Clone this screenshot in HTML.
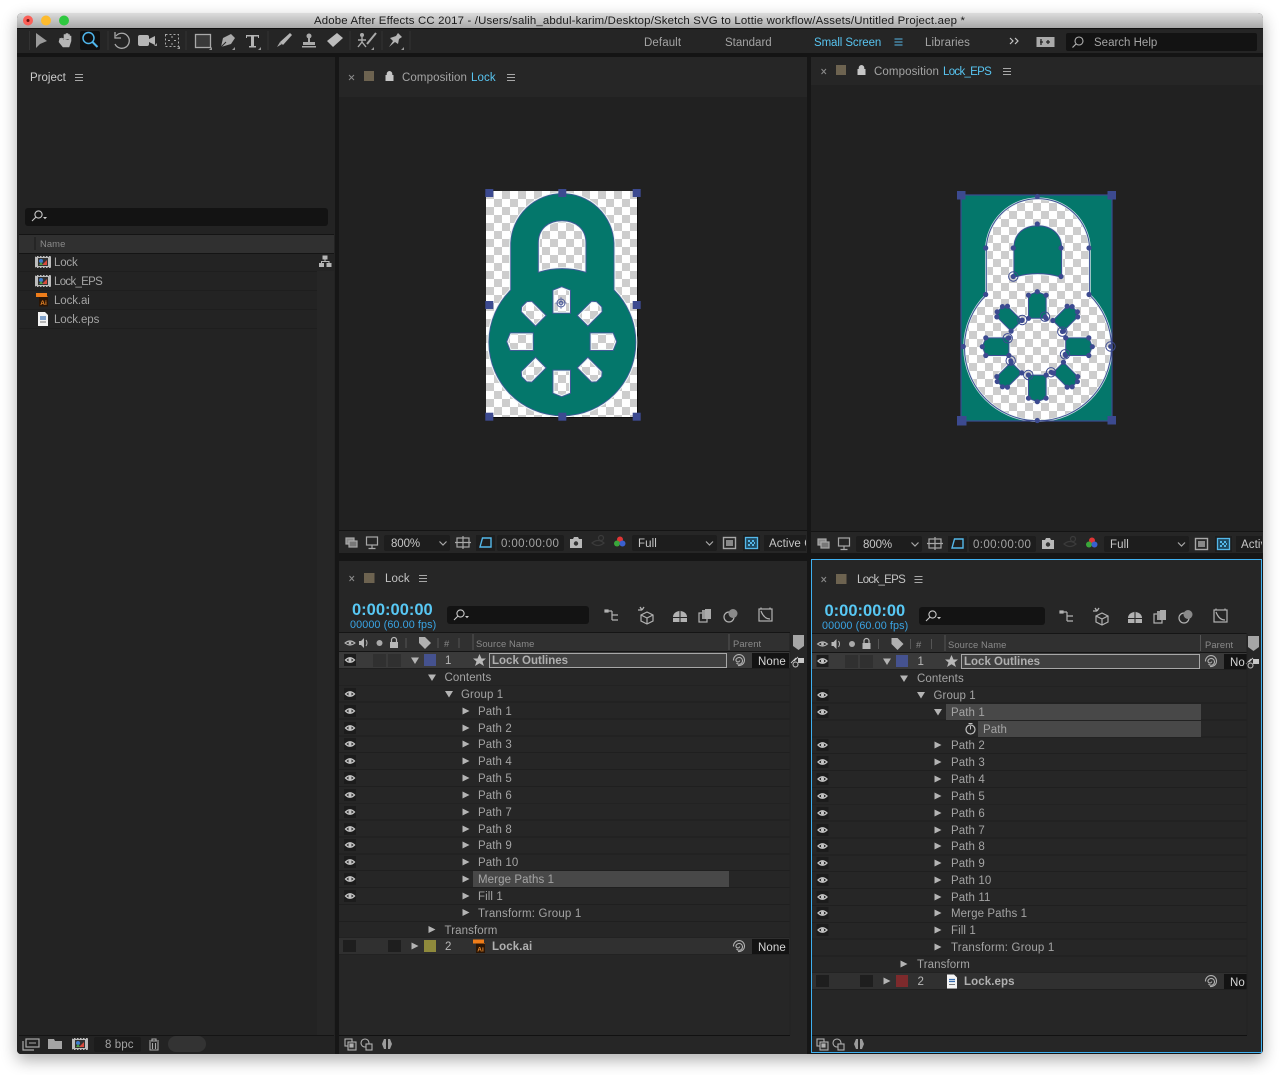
<!DOCTYPE html>
<html><head><meta charset="utf-8">
<style>
html,body{margin:0;padding:0;background:#fff;width:1280px;height:1075px;overflow:hidden}
#win{position:absolute;left:17px;top:13px;width:1246px;height:1041px;background:#161616;border-radius:5px 5px 4px 4px;box-shadow:0 6px 16px rgba(0,0,0,.32)}
.b{position:absolute}
.t{position:absolute;font:11.5px/16px "Liberation Sans",sans-serif;white-space:nowrap;color:#a4a4a4;font-style:normal;letter-spacing:.1px;margin-top:1px}
.h{font-size:9.4px;color:#8a8a8a}
.n{font-weight:bold;color:#b0b0b0}
.c{color:#58c4f0}
.e{letter-spacing:-.7px}
svg{position:absolute;left:0;top:0}
</style></head><body>
<div id="win"></div>
<!-- title -->
<div class="b" style="left:17px;top:13px;width:1246px;height:15px;background:linear-gradient(#dcdcdc,#a8a8a8);border-radius:5px 5px 0 0"></div>
<div class="b" style="left:17px;top:28px;width:1246px;height:25px;background:#252525;border-top:1px solid #111;box-sizing:border-box"></div>
<div class="b" style="left:17px;top:53px;width:1246px;height:4px;background:#141414"></div>
<!-- panels -->
<div class="b" style="left:17px;top:57px;width:318px;height:997px;background:#232323;border-radius:0 0 0 4px"></div>
<div class="b" style="left:317px;top:271px;width:17px;height:764px;background:#262626"></div>
<div class="b" style="left:339px;top:57px;width:468px;height:496px;background:#212121"></div>
<div class="b" style="left:339px;top:57px;width:468px;height:40px;background:#262626"></div>
<div class="b" style="left:811px;top:57px;width:452px;height:496px;background:#212121"></div>
<div class="b" style="left:811px;top:57px;width:452px;height:28px;background:#262626"></div>
<div class="b" style="left:339px;top:530px;width:468px;height:23px;background:#262626;border-top:1px solid #141414;box-sizing:border-box"></div>
<div class="b" style="left:811px;top:531px;width:452px;height:22px;background:#262626;border-top:1px solid #141414;box-sizing:border-box"></div>
<div class="b" style="left:339px;top:561px;width:468px;height:493px;background:#262626"></div>
<div class="b" style="left:811px;top:559px;width:451px;height:494px;background:#262626;border:1px solid #3fb0f0;box-sizing:border-box"></div>

<!-- project internals -->
<div class="b" style="left:25px;top:208px;width:303px;height:18px;background:#131313;border-radius:3px"></div>
<div class="b" style="left:19px;top:234px;width:315px;height:18px;background:#303030;border-top:1px solid #141414;border-bottom:1px solid #141414"></div>
<div class="b" style="left:19px;top:271px;width:298px;height:1px;background:#1e1e1e"></div>
<div class="b" style="left:19px;top:290px;width:298px;height:1px;background:#1e1e1e"></div>
<div class="b" style="left:19px;top:309px;width:298px;height:1px;background:#1e1e1e"></div>
<div class="b" style="left:19px;top:328px;width:298px;height:1px;background:#1e1e1e"></div>
<div class="b" style="left:19px;top:1035px;width:315px;height:1px;background:#141414"></div>
<div class="b" style="left:94px;top:1037px;width:47px;height:15px;background:#1c1c1c;border-radius:2px"></div>
<div class="b" style="left:168px;top:1036px;width:38px;height:16px;background:#333;border-radius:8px"></div>

<!-- comp footer boxes L -->
<div class="b" style="left:384px;top:535px;width:66px;height:16px;background:#1d1d1d;border-radius:2px"></div>
<div class="b" style="left:476px;top:535px;width:19px;height:16px;background:#1d1d1d"></div>
<div class="b" style="left:497px;top:535px;width:67px;height:16px;background:#1d1d1d;border-radius:2px"></div>
<div class="b" style="left:632px;top:535px;width:85px;height:16px;background:#1d1d1d;border-radius:2px"></div>
<div class="b" style="left:743px;top:535px;width:17px;height:16px;background:#1d1d1d"></div>
<div class="b" style="left:764px;top:535px;width:42px;height:16px;background:#1d1d1d"></div>
<!-- comp footer boxes R -->
<div class="b" style="left:856px;top:536px;width:66px;height:16px;background:#1d1d1d;border-radius:2px"></div>
<div class="b" style="left:948px;top:536px;width:19px;height:16px;background:#1d1d1d"></div>
<div class="b" style="left:969px;top:536px;width:67px;height:16px;background:#1d1d1d;border-radius:2px"></div>
<div class="b" style="left:1104px;top:536px;width:85px;height:16px;background:#1d1d1d;border-radius:2px"></div>
<div class="b" style="left:1215px;top:536px;width:17px;height:16px;background:#1d1d1d"></div>
<div class="b" style="left:1236px;top:536px;width:26px;height:16px;background:#1d1d1d"></div>

<!-- timeline L -->
<div class="b" style="left:447px;top:606px;width:142px;height:18px;background:#131313;border-radius:3px"></div>
<div class="b" style="left:339px;top:632px;width:451px;height:20px;background:#303030;border-top:1px solid #151515;border-bottom:1px solid #151515;box-sizing:border-box"></div>
<div class="b" style="left:339px;top:652px;width:451px;height:303px;background:repeating-linear-gradient(#262626 0,#262626 15.9px,#1f1f1f 15.9px,#1f1f1f 16.86px)"></div>
<div class="b" style="left:339px;top:652px;width:451px;height:16px;background:#3a3a3a"></div>
<div class="b" style="left:339px;top:938px;width:451px;height:16px;background:#303030"></div>
<div class="b" style="left:473px;top:871px;width:256px;height:16px;background:#484848"></div>
<div class="b" style="left:339px;top:1035px;width:451px;height:1px;background:#111"></div>
<div class="b" style="left:489px;top:653px;width:238px;height:15px;background:#404040;border:1.5px solid #a8a8a8;box-sizing:border-box"></div>
<div class="b" style="left:752px;top:653px;width:37px;height:15px;background:#131313"></div>
<div class="b" style="left:752px;top:939px;width:37px;height:15px;background:#131313"></div>
<div class="b" style="left:373px;top:654px;width:13px;height:13px;background:#303030"></div>
<div class="b" style="left:388px;top:654px;width:13px;height:13px;background:#303030"></div>
<div class="b" style="left:424px;top:654px;width:12px;height:12px;background:#45528f"></div>
<div class="b" style="left:424px;top:940px;width:12px;height:12px;background:#8f8a3c"></div>
<div class="b" style="left:343px;top:940px;width:13px;height:12px;background:#1e1e1e"></div>
<div class="b" style="left:388px;top:940px;width:13px;height:12px;background:#1e1e1e"></div>

<!-- timeline R -->
<div class="b" style="left:919px;top:607px;width:126px;height:18px;background:#131313;border-radius:3px"></div>
<div class="b" style="left:812px;top:633px;width:435px;height:20px;background:#303030;border-top:1px solid #151515;border-bottom:1px solid #151515;box-sizing:border-box"></div>
<div class="b" style="left:812px;top:653px;width:435px;height:337px;background:repeating-linear-gradient(#262626 0,#262626 15.9px,#1f1f1f 15.9px,#1f1f1f 16.86px)"></div>
<div class="b" style="left:812px;top:653px;width:435px;height:16px;background:#3a3a3a"></div>
<div class="b" style="left:812px;top:973px;width:435px;height:16px;background:#303030"></div>
<div class="b" style="left:946px;top:704px;width:255px;height:16px;background:#484848"></div>
<div class="b" style="left:978px;top:721px;width:223px;height:16px;background:#484848"></div>
<div class="b" style="left:812px;top:1035px;width:435px;height:1px;background:#111"></div>
<div class="b" style="left:961px;top:654px;width:239px;height:15px;background:#404040;border:1.5px solid #a8a8a8;box-sizing:border-box"></div>
<div class="b" style="left:1224px;top:654px;width:23px;height:15px;background:#131313"></div>
<div class="b" style="left:1224px;top:974px;width:23px;height:15px;background:#131313"></div>
<div class="b" style="left:845px;top:655px;width:13px;height:13px;background:#303030"></div>
<div class="b" style="left:860px;top:655px;width:13px;height:13px;background:#303030"></div>
<div class="b" style="left:896px;top:655px;width:12px;height:12px;background:#45528f"></div>
<div class="b" style="left:896px;top:975px;width:12px;height:12px;background:#7d2a2c"></div>
<div class="b" style="left:816px;top:975px;width:13px;height:12px;background:#1e1e1e"></div>
<div class="b" style="left:860px;top:975px;width:13px;height:12px;background:#1e1e1e"></div>

<!-- toolbar fields -->
<div class="b" style="left:1066px;top:33px;width:191px;height:18px;background:#131313;border-radius:2px"></div>
<div class="b" style="left:80px;top:31px;width:20px;height:19px;background:#101010;border-radius:2px"></div>

<svg width="1280" height="1075" viewBox="0 0 1280 1075">
<defs>
<pattern id="ck" width="16" height="16" patternUnits="userSpaceOnUse" x="486" y="191">
<rect width="16" height="16" fill="#fff"/><rect width="8" height="8" fill="#cdcdcd"/><rect x="8" y="8" width="8" height="8" fill="#cdcdcd"/></pattern>
<pattern id="ck2" width="16" height="16" patternUnits="userSpaceOnUse" x="961" y="195">
<rect width="16" height="16" fill="#fff"/><rect width="8" height="8" fill="#cdcdcd"/><rect x="8" y="8" width="8" height="8" fill="#cdcdcd"/></pattern>
<path id="outer" d="M510.7 290V243A51.7 51.7 0 0 1 614 243V290A73.5 73.5 0 1 1 510.7 290Z"/>
<path id="hole" d="M538.3 272.3V243C538.3 229 548 220.7 562 220.7C576 220.7 586 229 586 243V272.3Q562 265 538.3 272.3Z"/>
<path id="sp1" d="M552.9 313.3V290.2L561.7 286.7L570.5 290.2V313.3Z"/>
<path id="sp2" d="M554.2 312.2V292L558 288.7H565.4L569.2 292V312.2Z"/>
<g id="sps">
<use href="#sp1"/><use href="#sp2" transform="rotate(45 561.7 341.7)"/><use href="#sp1" transform="rotate(90 561.7 341.7)"/><use href="#sp2" transform="rotate(135 561.7 341.7)"/><use href="#sp1" transform="rotate(180 561.7 341.7)"/><use href="#sp2" transform="rotate(225 561.7 341.7)"/><use href="#sp1" transform="rotate(270 561.7 341.7)"/><use href="#sp2" transform="rotate(315 561.7 341.7)"/>
</g>
<mask id="m1" maskUnits="userSpaceOnUse" x="480" y="185" width="165" height="240"><rect x="480" y="185" width="165" height="240" fill="#fff"/><use href="#hole" fill="#000"/><use href="#sps" fill="#000"/></mask>
<mask id="m2" maskUnits="userSpaceOnUse" x="955" y="190" width="165" height="240"><rect x="955" y="190" width="165" height="240" fill="#fff"/><use href="#outer" fill="#000" transform="translate(475.6 5)"/></mask>
<g id="n1" fill="#3c4a90"><circle cx="552.9" cy="313.3" r="2.6"/><circle cx="552.9" cy="290.2" r="2.6"/><circle cx="561.7" cy="286.7" r="2.6"/><circle cx="570.5" cy="290.2" r="2.6"/><circle cx="570.5" cy="313.3" r="2.6"/></g>
<g id="n2" fill="#3c4a90"><circle cx="554.2" cy="312.2" r="2.6"/><circle cx="554.2" cy="292" r="2.6"/><circle cx="558" cy="288.7" r="2.6"/><circle cx="565.4" cy="288.7" r="2.6"/><circle cx="569.2" cy="292" r="2.6"/><circle cx="569.2" cy="312.2" r="2.6"/></g>
<g id="eye"><rect x="-6" y="-6" width="12" height="12" fill="#1c1c1c"/><path d="M-4.5 0Q0 -4.5 4.5 0Q0 4.5 -4.5 0Z" fill="none" stroke="#c4c4c4" stroke-width="1.3"/><circle r="1.6" fill="#c4c4c4"/></g>
<path id="td" d="M-4-3H4L0 3.5Z" fill="#b4b4b4"/>
<path id="tr" d="M-3.5-3.5L3.5 0L-3.5 3.5Z" fill="#b4b4b4"/>
<g id="swirl" fill="none" stroke="#b0b0b0" stroke-width="1.1"><path d="M-1 5.5A5.5 5.5 0 1 0 -5.5 0.5M-2.5 3A3.4 3.4 0 1 0 -3 -.5A1.7 1.7 0 1 0 .8 .5"/></g>
<g id="menu" stroke="#a8a8a8" stroke-width="1"><path d="M-4-3H4M-4 0H4M-4 3H4"/></g>
<g id="srch" fill="none" stroke="#c8c8c8" stroke-width="1.1"><circle cx="1.5" cy="-1.5" r="3.6"/><path d="M-1 1L-5 5"/><path d="M6 1H10L8 3.3Z" fill="#c8c8c8" stroke="none"/></g>
<path id="lk" d="M-3.5 -.5H3.5V4.5H-3.5ZM-2.3 -.5V-2.2A2.3 2.3 0 0 1 2.3 -2.2V-.5" fill="#c6c6c6" stroke="#c6c6c6" stroke-width="1"/>
<g id="comp"><rect x="-8" y="-6" width="16" height="12" fill="#bdbdbd" rx="1"/><path d="M-7.500-5.500H7.500M-7.500 5.500H7.500" stroke="#333" stroke-dasharray="1.500 1.500"/><rect x="-5" y="-4" width="10" height="8" fill="#333"/><circle cx="-2" cy="-1" r="2" fill="#3d7cd0"/><path d="M1 1L4 -2V3H-1Z" fill="#d84a3c"/><path d="M-4 3L-2 0L0 3Z" fill="#4da14a"/></g>
<g id="ai"><path d="M-4-7H5V-3.5H6V6.5H-3V-3H-6V-7Z" fill="#ef7d1a"/><rect x="-3" y="-3" width="9" height="9.5" fill="#2a1505"/><text x="1.5" y="5" font-family="Liberation Sans,sans-serif" font-size="6.5" font-weight="bold" text-anchor="middle" fill="#ef8a2a">Ai</text></g>
<g id="doc"><path d="M-5-7H2L5-4V7H-5Z" fill="#f4f4f4"/><path d="M-3-2H3M-3 0H3" stroke="#3a6fb0" stroke-width="1.2"/><path d="M-3 3H3" stroke="#777" stroke-width="1"/></g>
<g id="cfoot" fill="none" stroke="#a8a8a8" stroke-width="1.2">
<rect x="346" y="538" width="8" height="6" fill="#8a8a8a"/><rect x="349" y="541" width="8" height="6" fill="#777"/>
<rect x="366.500" y="537" width="11" height="8"/><path d="M372 545V548M368.500 548.500H375.500"/>
<rect x="457" y="538" width="12" height="9"/><path d="M463 536V549M455 542.500H471"/>
<path d="M480 547L482.500 538H491V547Z" stroke="#55b8ea" stroke-width="1.4"/>
<path d="M570 539H573L574 537H578L579 539H582V548H570Z" fill="#b8b8b8" stroke="none"/><circle cx="576" cy="543.500" r="2.200" fill="#333" stroke="none"/>
<path d="M592 543Q598 538 604 543Q598 548 592 543Z" stroke="#3b3b3b"/><circle cx="601" cy="538" r="2.500" stroke="#3b3b3b"/>
<rect x="723.500" y="537.500" width="12" height="11" stroke-width="1.4"/><rect x="726" y="540" width="7" height="6" fill="#888" stroke="none"/>
<rect x="745.500" y="537.500" width="12" height="11" stroke="#55b8ea" stroke-width="1.3" fill="#1f4a62"/><path d="M748 540h2v2h-2zM752 540h2v2h-2zM750 542h2v2h-2zM754 542h1v2h-1zM748 544h2v2h-2zM752 544h2v2h-2z" fill="#55b8ea" stroke="none"/>
<path d="M439.500 541.500L443 545L446.500 541.500M706 541.500L709.500 545L713 541.500"/>
</g>
<g id="cols" fill="none" stroke="#b2b2b2" stroke-width="1.2">
<path d="M606 611H612M612 611V620M612 615H618M612 620H618"/><rect x="605" y="610" width="3" height="2" fill="#b2b2b2"/>
<path d="M647 612L653 615V621L647 624L641 621V615Z"/><path d="M641 615L647 618L653 615M647 618V624"/><path d="M640 607L642 610M638 610H642M644 607L642 610" stroke-width="1.3"/>
<path d="M673 617A7 6 0 0 1 687 617Z" fill="#b2b2b2" stroke="none"/><rect x="673" y="618" width="14" height="4" fill="#b2b2b2" stroke="none"/><path d="M680 610V622" stroke="#333"/>
<rect x="699" y="613" width="8" height="9" fill="#262626"/><rect x="702" y="610" width="9" height="9" fill="#9a9a9a" stroke="none"/><rect x="705" y="609" width="6" height="10" fill="#aaa" stroke="none"/>
<circle cx="729" cy="617" r="5"/><circle cx="733" cy="613.500" r="4.500" fill="#8a8a8a" stroke="none"/>
<rect x="759" y="609" width="13" height="12"/><path d="M761 611Q764 619 770 619"/><path d="M761 607.500V609M770 607.500V609"/>
</g>
<g id="pick" fill="none" stroke="#c8c8c8" stroke-width="1"><circle cx="-1.500" cy="3.500" r="2.500"/><path d="M-3 0L1-4"/><rect x="1" y="-3" width="6" height="5" fill="#c8c8c8" stroke="none"/><path d="M-6 2L-1-3"/></g>
<g id="bot" fill="none" stroke="#b0b0b0" stroke-width="1.1">
<rect x="-6" y="-5" width="7" height="7"/><rect x="-3" y="-2" width="8" height="8" fill="#333"/><rect x="-1" y="0" width="3" height="3" fill="#b0b0b0"/>
<circle cx="14" cy="-1" r="4"/><rect x="15" y="0" width="6" height="6" fill="#2a2a2a"/>
<path d="M33-5H35V5H33L31 0ZM37-5H39L41 0L39 5H37Z" fill="#9c9c9c" stroke="none"/>
</g>
<g id="hdr">
<path d="M-5 0Q0-4 5 0Q0 4-5 0Z" fill="none" stroke="#b8b8b8" stroke-width="1.1"/><circle r="1.400" fill="#b8b8b8"/>
<path d="M9-2H11L14-5V5L11 2H9Z" fill="#b8b8b8"/><path d="M16-3Q18 0 16 3" fill="none" stroke="#b8b8b8"/>
<circle cx="29.500" r="3" fill="#aaa"/>
<rect x="40" y="-1" width="8" height="6" fill="#b8b8b8"/><path d="M41.500-1V-3A2.500 2.500 0 0 1 46.500-3V-1" fill="none" stroke="#b8b8b8" stroke-width="1.200"/>
<path d="M56-5V5" stroke="#555"/>
<path d="M69-6H75L81 0L75 6L69 0Z" fill="#b0b0b0"/>
<path d="M88-5V5" stroke="#555"/><path d="M109-5V5" stroke="#555"/>
</g>
</defs>

<!-- traffic lights -->
<circle cx="28" cy="20.500" r="5" fill="#fb5f57"/><circle cx="28" cy="20.500" r="1.500" fill="#6b0f0c"/>
<circle cx="46" cy="20.500" r="5" fill="#fdbb2e"/><circle cx="64" cy="20.500" r="5" fill="#2fc840"/>

<!-- toolbar icons -->
<path d="M36 33V48L40 44L47 41Z" fill="#9a9a9a"/>
<path d="M60 38L59 42L63 47H69L71 41V36H69.500V40M69.500 40V34.500H68V39M68 39V33.500H66V39M66 39V34.500H64V40.500L61.500 38Z" fill="#b6b6b6" stroke="#b6b6b6" stroke-width=".6" stroke-linejoin="round"/>
<circle cx="88.500" cy="38" r="5.500" fill="none" stroke="#4fb6ec" stroke-width="1.500"/><path d="M92.500 42L97.500 47" stroke="#4fb6ec" stroke-width="2"/>
<path d="M116 36A7.500 7.500 0 1 1 115 44" fill="none" stroke="#aaa" stroke-width="1.300"/><path d="M115 32V38H121" fill="none" stroke="#aaa" stroke-width="1.300"/>
<rect x="138" y="35" width="11" height="11" rx="2" fill="#b6b6b6"/><path d="M149 39L155 36V45L149 42Z" fill="#b6b6b6"/>
<rect x="165.500" y="34.500" width="13" height="12" fill="none" stroke="#aaa" stroke-dasharray="2 2"/><path d="M172 36V38M172 43V45M168 40.500H170M174 40.500H176" stroke="#aaa"/>
<rect x="195.500" y="34.500" width="15" height="13" fill="#3a3a3a" stroke="#a9a9a9" stroke-width="1.300"/>
<path d="M221 47L223 38L231 34L235 38L231 44Z" fill="#aaa"/><path d="M221 47L226 42" stroke="#252525"/>
<path d="M246 35H259V38H258V36.500H254V46H256V47.500H249V46H251V36.500H247V38H246Z" fill="#b4b4b4"/>
<path d="M277 47L280 42L282 44Z" fill="#aaa"/><path d="M280 42L290 33L292 35L283 45Z" fill="#b5b5b5"/>
<circle cx="309" cy="36" r="2.500" fill="#aaa"/><path d="M308 38H310V42H315V45H303V42H308Z" fill="#aaa"/><rect x="302" y="46" width="14" height="1.500" fill="#aaa"/>
<path d="M327 41L337 33L343 38L333 47Z" fill="#bcbcbc"/>
<circle cx="362" cy="35" r="2" fill="#aaa"/><path d="M362 37V42L358 47M362 42L366 47M358 40H366" fill="none" stroke="#aaa" stroke-width="1.400"/><path d="M367 44L376 33" stroke="#aaa" stroke-width="2"/>
<path d="M389 47L393 41L390 38L396 36L398 33L402 37L399 39L398 44L395 42Z" fill="#b4b4b4"/>
<g stroke="#333"><path d="M29.500 31V50M108 31V50M186 31V50M268 31V50M350 31V50M382 31V50M410 31V50" /></g>
<g fill="#999"><path d="M157 46H154L157 43ZM212 50H209L212 47ZM235 50H232L235 47ZM261 50H258L261 47ZM374 50H371L374 47ZM404 50H401L404 47ZM180 49H177L180 46Z"/></g>

<path d="M894.500 39H902.500M894.500 42H902.500M894.500 45H902.500" stroke="#56b8e8"/>
<path d="M1010 38L1013 41L1010 44M1015 38L1018 41L1015 44" fill="none" stroke="#c4c4c4" stroke-width="1.200"/>
<rect x="1036.500" y="37" width="18" height="10" fill="#aaa"/><path d="M1040 42h3M1048 40v4M1046 42h4M1041 39v6" stroke="#252525" stroke-width="1.300"/>
<circle cx="1079" cy="41" r="4" fill="none" stroke="#b0b0b0" stroke-width="1.100"/><path d="M1076 44L1072.500 47.500" stroke="#b0b0b0" stroke-width="1.200"/>

<!-- panel tabs -->
<use href="#menu" x="79" y="77.500"/>
<use href="#srch" x="37" y="216"/>
<path d="M349 75L354 80M354 75L349 80M821.500 69L826 74M826 69L821.500 74M349.500 576L354 581M354 576L349.500 581M821.500 577L826 582M826 577L821.500 582" stroke="#8a8a8a"/>
<rect x="364" y="71" width="10" height="10" fill="#6d6350"/><rect x="836" y="65" width="10" height="10" fill="#6d6350"/>
<rect x="364" y="573" width="10.500" height="10" fill="#6d6350"/><rect x="836" y="574" width="10.500" height="10" fill="#6d6350"/>
<use href="#lk" x="389.500" y="76"/><use href="#lk" x="861.500" y="70"/>
<use href="#menu" x="511" y="77.500"/><use href="#menu" x="1007" y="71.500"/>
<use href="#menu" x="423" y="578.500"/><use href="#menu" x="918.500" y="579.500"/>

<!-- project icons -->
<use href="#comp" x="43" y="262"/><use href="#comp" x="43" y="281"/><use href="#ai" x="42" y="300"/><use href="#doc" x="43" y="319"/>
<g fill="#b5b5b5"><rect x="322.500" y="255.500" width="5" height="4"/><rect x="319" y="263" width="5" height="4"/><rect x="326.500" y="263" width="5" height="4"/></g>
<path d="M325 259.500V261.500M321.500 263V261.500H329V263" stroke="#b5b5b5" fill="none"/>
<path d="M35 237V250" stroke="#1a1a1a"/>
<!-- project bottom -->
<rect x="26" y="1039" width="13" height="8" fill="none" stroke="#aaa" stroke-width="1.200"/><path d="M23 1041V1050H34" fill="none" stroke="#aaa" stroke-width="1.200"/><path d="M29 1043H36" stroke="#aaa"/>
<path d="M48 1039H54L55 1041H62V1049H48Z" fill="#a5a5a5"/>
<use href="#comp" x="80" y="1044"/>
<path d="M149 1041H159M150 1042V1050H158V1042M152 1041V1039H156V1041M152.500 1043V1049M155.500 1043V1049" fill="none" stroke="#aaa" stroke-width="1.100"/>
<use href="#bot" x="351" y="1044"/><use href="#bot" x="823" y="1044"/>

<!-- comp footers -->
<use href="#cfoot"/><use href="#cfoot" x="472" y="1"/>
<circle cx="620" cy="539.500" r="3" fill="#e03535"/><circle cx="617" cy="543.500" r="3" fill="#3aa63a"/><circle cx="622.500" cy="543.500" r="3" fill="#3a60d0"/>
<circle cx="1092" cy="540.500" r="3" fill="#e03535"/><circle cx="1089" cy="544.500" r="3" fill="#3aa63a"/><circle cx="1094.500" cy="544.500" r="3" fill="#3a60d0"/>

<!-- LEFT comp -->
<rect x="487" y="192" width="151" height="226" fill="#0c0c0c"/>
<rect x="486" y="191" width="151" height="226" fill="url(#ck)"/>
<use href="#outer" fill="none" stroke="#eef8f6" stroke-width="3"/>
<use href="#hole" fill="none" stroke="#eef8f6" stroke-width="3"/>
<use href="#sps" fill="none" stroke="#eef8f6" stroke-width="3"/>
<use href="#outer" fill="#04776b" mask="url(#m1)"/>
<use href="#outer" fill="none" stroke="#3f5a96" stroke-width=".9"/>
<use href="#hole" fill="none" stroke="#3f5a96"/>
<use href="#sps" fill="none" stroke="#3f5a96"/>
<g fill="#3c4a90"><rect x="485.300" y="189" width="8" height="8"/><rect x="558.300" y="189" width="8" height="8"/><rect x="632.700" y="189" width="8" height="8"/><rect x="485.300" y="301" width="8" height="8"/><rect x="632.700" y="301" width="8" height="8"/><rect x="485.300" y="412.700" width="8" height="8"/><rect x="558.300" y="412.700" width="8" height="8"/><rect x="632.700" y="412.700" width="8" height="8"/></g>
<circle cx="561" cy="303" r="4" fill="none" stroke="#4a5a98"/><circle cx="561" cy="303" r="1.800" fill="none" stroke="#4a5a98"/><path d="M561 297V309M555 303H567" stroke="#4a5a98" stroke-width=".6"/>

<!-- RIGHT comp -->
<rect x="961" y="195" width="151" height="226" fill="url(#ck2)"/>
<rect x="961" y="195" width="151" height="226" fill="#04776b" mask="url(#m2)"/>
<g transform="translate(475.600 5)">
<use href="#hole" fill="none" stroke="#eef8f6" stroke-width="3"/>
<use href="#sps" fill="none" stroke="#eef8f6" stroke-width="3"/>
<use href="#hole" fill="#04776b" stroke="#3f4f96"/>
<use href="#sps" fill="#04776b" stroke="#3f4f96"/>
<use href="#outer" fill="none" stroke="#e8f4f2" stroke-width="2.500" opacity=".85"/>
<use href="#outer" fill="none" stroke="#3f4f96" stroke-width="1"/>
<use href="#n1"/><use href="#n2" transform="rotate(45 561.700 341.700)"/><use href="#n1" transform="rotate(90 561.700 341.700)"/><use href="#n2" transform="rotate(135 561.700 341.700)"/><use href="#n1" transform="rotate(180 561.700 341.700)"/><use href="#n2" transform="rotate(225 561.700 341.700)"/><use href="#n1" transform="rotate(270 561.700 341.700)"/><use href="#n2" transform="rotate(315 561.700 341.700)"/>
</g>
<rect x="961" y="195" width="151" height="226" fill="none" stroke="#3c4a90" stroke-width="1.200"/>
<g fill="#3c4a90">
<rect x="957" y="191" width="8.500" height="8.500"/><rect x="1107.500" y="191" width="8.500" height="8.500"/><rect x="957" y="416" width="9.500" height="9.500"/><rect x="1107.500" y="416" width="8.500" height="8.500"/>
<circle cx="1037.300" cy="196.500" r="2.600"/><circle cx="1037.300" cy="420.500" r="2.600"/><circle cx="963.300" cy="346.500" r="2.600"/><circle cx="985.700" cy="248" r="2.600"/><circle cx="1089" cy="248" r="2.600"/><circle cx="985.700" cy="294.500" r="2.600"/><circle cx="1089" cy="294.500" r="2.600"/><circle cx="1013.300" cy="248" r="2.600"/><circle cx="1061" cy="248" r="2.600"/><circle cx="1037.300" cy="224" r="2.600"/><circle cx="1013.300" cy="276.500" r="2.600"/><circle cx="1061" cy="276.500" r="2.600"/>
<circle cx="1110.500" cy="346.500" r="2.400"/><circle cx="1022.300" cy="320" r="2.400"/><circle cx="1045" cy="316.700" r="2.400"/><circle cx="1062.300" cy="331.700" r="2.400"/><circle cx="1065" cy="354.300" r="2.400"/><circle cx="1051" cy="372.300" r="2.400"/><circle cx="1028.300" cy="375" r="2.400"/><circle cx="1010.700" cy="360.700" r="2.400"/><circle cx="1007.700" cy="338.300" r="2.400"/>
</g>
<g fill="none" stroke="#3c4a90" stroke-width="1"><circle cx="1013.300" cy="276.500" r="4.700"/><circle cx="1110.500" cy="346.500" r="4.700"/><circle cx="1022.300" cy="320" r="4.700"/><circle cx="1045" cy="316.700" r="4.700"/><circle cx="1062.300" cy="331.700" r="4.700"/><circle cx="1065" cy="354.300" r="4.700"/><circle cx="1051" cy="372.300" r="4.700"/><circle cx="1028.300" cy="375" r="4.700"/><circle cx="1010.700" cy="360.700" r="4.700"/><circle cx="1007.700" cy="338.300" r="4.700"/></g>

<!-- timeline left icons -->
<use href="#srch" x="459" y="615"/><use href="#srch" x="931" y="616"/>
<use href="#cols"/><use href="#cols" x="455" y="1"/>
<use href="#hdr" x="350" y="643"/><use href="#hdr" x="822.500" y="644"/>
<path d="M793 635H804V646L798.500 650L793 646Z" fill="#a5a5a5"/><path d="M1248 636H1259V647L1253.500 651L1248 647Z" fill="#a5a5a5"/>
<path d="M473 634V650M729 634V650M1200.500 635V651M945 635V651" stroke="#555"/>

<use href="#eye" x="350" y="660"/><use href="#eye" x="350" y="694"/><use href="#eye" x="350" y="711"/><use href="#eye" x="350" y="728"/><use href="#eye" x="350" y="744"/><use href="#eye" x="350" y="761"/><use href="#eye" x="350" y="778"/><use href="#eye" x="350" y="795"/><use href="#eye" x="350" y="812"/><use href="#eye" x="350" y="829"/><use href="#eye" x="350" y="845"/><use href="#eye" x="350" y="862"/><use href="#eye" x="350" y="879"/><use href="#eye" x="350" y="896"/>

<use href="#td" x="415" y="660.500"/><use href="#td" x="432" y="677.500"/><use href="#td" x="449" y="694"/>
<use href="#tr" x="466" y="711"/><use href="#tr" x="466" y="728"/><use href="#tr" x="466" y="744"/><use href="#tr" x="466" y="761"/><use href="#tr" x="466" y="778"/><use href="#tr" x="466" y="795"/><use href="#tr" x="466" y="812"/><use href="#tr" x="466" y="829"/><use href="#tr" x="466" y="845"/><use href="#tr" x="466" y="862"/><use href="#tr" x="466" y="879"/><use href="#tr" x="466" y="896"/><use href="#tr" x="466" y="912.500"/><use href="#tr" x="432" y="929.500"/><use href="#tr" x="415" y="946"/>
<path d="M479.500 654L481.500 658.500H486L482.500 661.500L484 666L479.500 663.300L475 666L476.500 661.500L473 658.500H477.500Z" fill="#b8b8b8"/>
<use href="#ai" x="479" y="946.500"/>
<use href="#swirl" x="739" y="660"/><use href="#swirl" x="739" y="946"/><use href="#pick" x="797" y="661"/>

<!-- timeline right icons -->
<use href="#eye" x="822.500" y="661"/><use href="#eye" x="822.500" y="695"/><use href="#eye" x="822.500" y="712"/><use href="#eye" x="822.500" y="745"/><use href="#eye" x="822.500" y="762"/><use href="#eye" x="822.500" y="779"/><use href="#eye" x="822.500" y="796"/><use href="#eye" x="822.500" y="813"/><use href="#eye" x="822.500" y="830"/><use href="#eye" x="822.500" y="846"/><use href="#eye" x="822.500" y="863"/><use href="#eye" x="822.500" y="880"/><use href="#eye" x="822.500" y="897"/><use href="#eye" x="822.500" y="913"/><use href="#eye" x="822.500" y="930"/>
<use href="#td" x="887" y="661.500"/><use href="#td" x="904" y="678.500"/><use href="#td" x="921" y="695"/><use href="#td" x="938" y="712"/>
<use href="#tr" x="938" y="745"/><use href="#tr" x="938" y="762"/><use href="#tr" x="938" y="779"/><use href="#tr" x="938" y="796"/><use href="#tr" x="938" y="813"/><use href="#tr" x="938" y="830"/><use href="#tr" x="938" y="846"/><use href="#tr" x="938" y="863"/><use href="#tr" x="938" y="880"/><use href="#tr" x="938" y="897"/><use href="#tr" x="938" y="913"/><use href="#tr" x="938" y="930"/><use href="#tr" x="938" y="947"/><use href="#tr" x="904" y="964"/><use href="#tr" x="887" y="981"/>
<path d="M951.500 655L953.500 659.500H958L954.500 662.500L956 667L951.500 664.300L947 667L948.500 662.500L945 659.500H949.500Z" fill="#b8b8b8"/>
<use href="#doc" x="952" y="981.500"/>
<use href="#swirl" x="1211" y="661"/><use href="#swirl" x="1211" y="981"/><use href="#pick" x="1252" y="662"/>
<circle cx="970.500" cy="729.500" r="4.500" fill="none" stroke="#c0c0c0" stroke-width="1.200"/><path d="M968.500 723.500H972.500M970.500 729.500V726" stroke="#c0c0c0"/>
<path d="M1247 633V1035" stroke="#222"/>
<path d="M790 633V1035" stroke="#222"/>
</svg>

<!-- TEXT -->
<i class="t" style="left:314px;top:11.500px;color:#1a1a1a;font-size:11.400px;letter-spacing:.175px">Adobe After Effects CC 2017 - /Users/salih_abdul-karim/Desktop/Sketch SVG to Lottie workflow/Assets/Untitled Project.aep *</i>
<i class="t" style="left:644px;top:34px">Default</i>
<i class="t" style="left:725px;top:34px;letter-spacing:0">Standard</i>
<i class="t c" style="left:814px;top:34px;letter-spacing:-.1px">Small Screen</i>
<i class="t" style="left:925px;top:34px">Libraries</i>
<i class="t" style="left:1094px;top:33.500px;letter-spacing:0">Search Help</i>

<i class="t" style="left:30px;top:69px;color:#ccc;letter-spacing:0">Project</i>
<i class="t h" style="left:40px;top:235px">Name</i>
<i class="t" style="left:54px;top:254px;letter-spacing:-.2px">Lock</i>
<i class="t e" style="left:54px;top:273px">Lock_EPS</i>
<i class="t" style="left:54px;top:292px;letter-spacing:-.1px">Lock.ai</i>
<i class="t" style="left:54px;top:311px;letter-spacing:-.1px">Lock.eps</i>
<i class="t" style="left:105px;top:1036px">8 bpc</i>

<i class="t" style="left:402px;top:69px">Composition</i><i class="t c" style="left:471px;top:69px">Lock</i>
<i class="t" style="left:874px;top:63px">Composition</i><i class="t c e" style="left:943px;top:63px">Lock_EPS</i>

<i class="t" style="left:391px;top:535px;color:#c8c8c8;letter-spacing:-.1px">800%</i>
<i class="t" style="left:501px;top:535px;letter-spacing:.4px">0:00:00:00</i>
<i class="t" style="left:638px;top:535px;color:#c8c8c8">Full</i>
<i class="t" style="left:769px;top:535px;color:#c8c8c8;width:37px;overflow:hidden">Active Camera</i>
<i class="t" style="left:863px;top:536px;color:#c8c8c8;letter-spacing:-.1px">800%</i>
<i class="t" style="left:973px;top:536px;letter-spacing:.4px">0:00:00:00</i>
<i class="t" style="left:1110px;top:536px;color:#c8c8c8">Full</i>
<i class="t" style="left:1241px;top:536px;color:#c8c8c8;width:21px;overflow:hidden">Active Camera</i>

<i class="t" style="left:385px;top:570px;color:#c4c4c4">Lock</i>
<i class="t e" style="left:857px;top:571px;color:#c4c4c4">Lock_EPS</i>

<i class="t" style="left:352px;top:601px;font-size:16.500px;font-weight:bold;color:#58c8f4;letter-spacing:0">0:00:00:00</i>
<i class="t" style="left:350px;top:616px;font-size:10.800px;color:#3aa4e4">00000 (60.00 fps)</i>
<i class="t" style="left:824.500px;top:602px;font-size:16.500px;font-weight:bold;color:#58c8f4;letter-spacing:0">0:00:00:00</i>
<i class="t" style="left:822px;top:617px;font-size:10.800px;color:#3aa4e4">00000 (60.00 fps)</i>

<i class="t h" style="left:444px;top:635px">#</i><i class="t h" style="left:476px;top:635px">Source Name</i><i class="t h" style="left:733px;top:635px">Parent</i>
<i class="t h" style="left:916px;top:636px">#</i><i class="t h" style="left:948px;top:636px">Source Name</i><i class="t h" style="left:1205px;top:636px">Parent</i>

<i class="t" style="left:445px;top:652px;color:#b8b8b8">1</i>
<i class="t n" style="left:492px;top:652px;letter-spacing:0">Lock Outlines</i>
<i class="t" style="left:758px;top:652.500px;color:#d6d6d6">None</i>
<i class="t" style="left:444.500px;top:669px">Contents</i>
<i class="t" style="left:461px;top:686px">Group 1</i>
<i class="t" style="left:478px;top:703px">Path 1</i>
<i class="t" style="left:478px;top:720px">Path 2</i>
<i class="t" style="left:478px;top:736px">Path 3</i>
<i class="t" style="left:478px;top:753px">Path 4</i>
<i class="t" style="left:478px;top:770px">Path 5</i>
<i class="t" style="left:478px;top:787px">Path 6</i>
<i class="t" style="left:478px;top:804px">Path 7</i>
<i class="t" style="left:478px;top:821px">Path 8</i>
<i class="t" style="left:478px;top:837px">Path 9</i>
<i class="t" style="left:478px;top:854px">Path 10</i>
<i class="t" style="left:478px;top:871px">Merge Paths 1</i>
<i class="t" style="left:478px;top:888px">Fill 1</i>
<i class="t" style="left:478px;top:904.500px;letter-spacing:.2px">Transform: Group 1</i>
<i class="t" style="left:444.500px;top:921.500px">Transform</i>
<i class="t" style="left:445px;top:938px;color:#b8b8b8">2</i>
<i class="t n" style="left:492px;top:938px">Lock.ai</i>
<i class="t" style="left:758px;top:938.500px;color:#d6d6d6">None</i>

<i class="t" style="left:917.500px;top:653px;color:#b8b8b8">1</i>
<i class="t n" style="left:964px;top:653px;letter-spacing:0">Lock Outlines</i>
<i class="t" style="left:1230px;top:653.500px;color:#d6d6d6">No</i>
<i class="t" style="left:917px;top:670px">Contents</i>
<i class="t" style="left:933.500px;top:687px">Group 1</i>
<i class="t" style="left:951px;top:704px">Path 1</i>
<i class="t" style="left:983px;top:721px">Path</i>
<i class="t" style="left:951px;top:737px">Path 2</i>
<i class="t" style="left:951px;top:754px">Path 3</i>
<i class="t" style="left:951px;top:771px">Path 4</i>
<i class="t" style="left:951px;top:788px">Path 5</i>
<i class="t" style="left:951px;top:805px">Path 6</i>
<i class="t" style="left:951px;top:822px">Path 7</i>
<i class="t" style="left:951px;top:838px">Path 8</i>
<i class="t" style="left:951px;top:855px">Path 9</i>
<i class="t" style="left:951px;top:872px">Path 10</i>
<i class="t" style="left:951px;top:889px">Path 11</i>
<i class="t" style="left:951px;top:905px">Merge Paths 1</i>
<i class="t" style="left:951px;top:922px">Fill 1</i>
<i class="t" style="left:951px;top:939px;letter-spacing:.2px">Transform: Group 1</i>
<i class="t" style="left:917px;top:956px">Transform</i>
<i class="t" style="left:917.500px;top:973px;color:#b8b8b8">2</i>
<i class="t n" style="left:964px;top:973px">Lock.eps</i>
<i class="t" style="left:1230px;top:973.500px;color:#d6d6d6">No</i>
</body></html>
